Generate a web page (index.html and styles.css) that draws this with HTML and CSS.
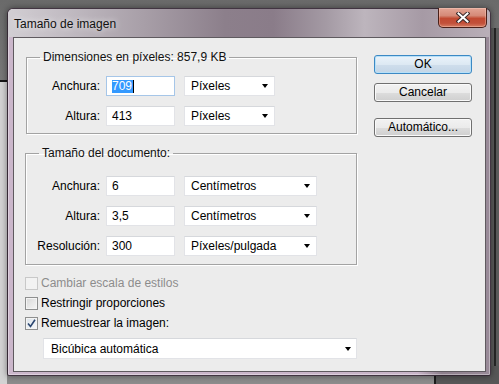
FILE: index.html
```html
<!DOCTYPE html>
<html lang="es">
<head>
  <meta charset="UTF-8" />
  <title>Tamaño de imagen</title>
  <link rel="stylesheet" href="styles.css">
</head>
<body>

  <div class="window">

    <header class="titlebar">
      <span class="title">Tamaño de imagen</span>
      <button class="close-btn" type="button" aria-label="Cerrar">
        <svg width="14" height="11" viewBox="0 0 14 11">
          <path d="M2.5 1.5 L11.5 9.5 M11.5 1.5 L2.5 9.5" stroke="#3a2a2a" stroke-width="4" stroke-linecap="square" />
          <path d="M2.5 1.5 L11.5 9.5 M11.5 1.5 L2.5 9.5" stroke="#ffffff" stroke-width="2" stroke-linecap="square" />
        </svg>
      </button>
    </header>

    <div class="client">

      <!-- columna izquierda: grupos y opciones -->
      <div class="main-col">

        <fieldset class="group group-px">
          <legend>Dimensiones en píxeles: 857,9 KB</legend>
          <div class="field-row">
            <label>Anchura:</label>
            <div class="text-input focused"><span class="selected-text">709</span><span class="caret"></span></div>
            <div class="combo">Píxeles<span class="arrow"></span></div>
          </div>
          <div class="field-row">
            <label>Altura:</label>
            <div class="text-input">413</div>
            <div class="combo">Píxeles<span class="arrow"></span></div>
          </div>
        </fieldset>

        <fieldset class="group group-doc">
          <legend>Tamaño del documento:</legend>
          <div class="field-row">
            <label>Anchura:</label>
            <div class="text-input">6</div>
            <div class="combo combo-wide">Centímetros<span class="arrow"></span></div>
          </div>
          <div class="field-row">
            <label>Altura:</label>
            <div class="text-input">3,5</div>
            <div class="combo combo-wide">Centímetros<span class="arrow"></span></div>
          </div>
          <div class="field-row">
            <label>Resolución:</label>
            <div class="text-input">300</div>
            <div class="combo combo-wide">Píxeles/pulgada<span class="arrow"></span></div>
          </div>
        </fieldset>

        <div class="checks">
          <div class="check-row disabled"><span class="checkbox"></span>Cambiar escala de estilos</div>
          <div class="check-row"><span class="checkbox"></span>Restringir proporciones</div>
          <div class="check-row"><span class="checkbox checked">
            <svg width="9" height="9" viewBox="0 0 9 9"><path d="M1 4.5 L3.5 7.5 L8 0.8" fill="none" stroke="#2b4670" stroke-width="1.6" /></svg>
          </span>Remuestrear la imagen:</div>
        </div>

        <div class="combo combo-method">Bicúbica automática<span class="arrow"></span></div>

      </div>

      <!-- columna derecha: botones -->
      <div class="button-col">
        <button class="btn btn-default" type="button">OK</button>
        <button class="btn" type="button">Cancelar</button>
        <button class="btn btn-auto" type="button">Automático...</button>
      </div>

    </div>
  </div>

</body>
</html>
```

FILE: styles.css
```css
/* --- base --- */
*, *::before, *::after { box-sizing: border-box; }
body {
  margin: 0; width: 499px; height: 384px; overflow: hidden;
  font-family: 'Liberation Sans', Arial, sans-serif; font-size: 12px; color: #000;
  background:
    linear-gradient(#161616, #161616) 0 80px / 10px 2px no-repeat,
    linear-gradient(#d3d3d3, #d3d3d3) 0 82px / 7px 100% no-repeat,
    linear-gradient(#1c1c1c, #1c1c1c) 434px 366px / 2px 30px no-repeat,
    linear-gradient(#575757, #575757) 436px 366px / 70px 30px no-repeat,
    linear-gradient(#262626, #262626) 494px 28px / 2px 100% no-repeat,
    linear-gradient(#5b5b5b, #5b5b5b) 491px 28px / 10px 100% no-repeat,
    linear-gradient(to bottom, #6a6a6a, #7d7d7d 30%, #8c8c8c);
}

/* --- ventana (marco aero) --- */
.window {
  margin: 8px 0 0 7px; width: 484px; height: 368px;
  display: flex; flex-direction: column;
  border: 1px solid rgba(20, 10, 20, 0.75); border-radius: 6px 6px 2px 2px;
  background: linear-gradient(to right, #cbb7cb 0%, #c8b4c8 85%, #8d7f8c 90%, #9a8b99 100%);
  box-shadow: 0 0 6px rgba(0, 0, 0, 0.45), inset 0 0 0 1px rgba(255, 255, 255, 0.35);
}
.titlebar {
  height: 28px; flex: none; display: flex; align-items: flex-start;
  border-radius: 5px 5px 0 0;
  background: linear-gradient(to right, #d2ced3 0%, #c1bbc2 12%, #a89fa8 28%, #8c7f8b 45%, #8a7c89 55%, #a49aa4 66%, #bdb5bd 74%, #a69aa5 86%, #b9afb8 100%);
}
.title { padding: 7px 0 0 6px; font-size: 12px; line-height: 16px; color: #111; text-shadow: 0 0 6px rgba(255, 255, 255, 0.9); }
.close-btn {
  margin: -1px 3px 0 auto; width: 49px; height: 20px; padding: 0;
  display: flex; align-items: center; justify-content: center;
  border: 1px solid #4a2019; border-top: none; border-radius: 0 0 5px 5px;
  background: linear-gradient(to bottom, #e3a595 0%, #d58a77 40%, #c14a31 55%, #c2503a 80%, #d67e64 100%);
  box-shadow: inset 0 0 0 1px rgba(255, 220, 210, 0.35);
}
.close-btn svg { display: block; }

.client {
  flex: 1; margin: 0 4px 3px 5px; display: flex;
  background: #ececec; border: 1px solid #5f5a5f;
}

/* --- columna principal --- */
.main-col { width: 360px; padding: 11px 0 0 11px; display: flex; flex-direction: column; }

.group {
  margin: 0; width: 331px; padding: 0 0 7px 0;
  border: 1px solid #a3a3a3; border-radius: 0;
  box-shadow: 1px 1px 0 #fff, inset 1px 1px 0 #fff;
}
.group legend { margin-left: 13px; padding: 0 3px; line-height: 16px; color: #111; }
.group-px { margin-left: 1px; }
.group-doc { margin-top: 11px; padding-top: 2px; padding-bottom: 8px; width: 332px; }

.field-row { display: flex; align-items: center; height: 20px; margin-top: 10px; }
.group-px .field-row:first-of-type { margin-top: 11px; }
.group-doc .field-row:first-of-type { margin-top: 13px; }
.group-px .field-row label { width: 73px; }
.field-row label { width: 74px; text-align: right; padding-right: 0; }

.text-input {
  margin-left: 6px; width: 69px; height: 20px; padding: 0 0 0 5px;
  display: flex; align-items: center;
  background: #fff; border: 1px solid #e2e3e7; border-top-color: #d6d8dc;
}
.text-input.focused { border-color: #a6c6e8; }
.selected-text { background: #3399ff; color: #fff; line-height: 13px; padding: 0 1px 0 0; }
.caret { width: 1px; height: 13px; background: #000; }

.combo {
  position: relative; margin-left: 9px; width: 91px; height: 20px; padding: 0 0 0 6px;
  display: flex; align-items: center;
  background: #fff; border: 1px solid #e2e3e7; border-top-color: #d6d8dc;
}
.combo-wide { width: 133px; }
.arrow {
  position: absolute; right: 6px; top: 7px;
  border-left: 3.5px solid transparent; border-right: 3.5px solid transparent; border-top: 4px solid #000;
}

/* --- casillas --- */
.checks { margin-top: 8px; display: flex; flex-direction: column; }
.check-row { height: 20px; display: flex; align-items: center; gap: 3px; }
.checkbox {
  width: 13px; height: 13px; display: flex; align-items: center; justify-content: center;
  border: 1px solid #8e8f8f;
  background: linear-gradient(135deg, #d8d8d8, #f6f6f6);
  box-shadow: inset 0 0 0 1px #f4f4f4;
}
.check-row.disabled { color: #8c8c8c; }
.check-row.disabled .checkbox { border-color: #c8c8c8; background: #f2f2f2; box-shadow: none; }
.checkbox.checked { background: linear-gradient(135deg, #dce3ea, #f8f9fa); }
.checkbox svg { display: block; }

.combo-method { margin: 5px 0 0 18px; width: 314px; height: 21px; padding-left: 7px; }
.combo-method .arrow { top: 8px; right: 5px; }

/* --- botones --- */
.button-col { padding: 17px 0 0 0; display: flex; flex-direction: column; }
.btn {
  width: 98px; height: 19px; padding: 0; font: inherit; color: #000; line-height: 15px;
  border: 1px solid #707070; border-radius: 3px;
  background: linear-gradient(to bottom, #f2f2f2 0%, #ebebeb 50%, #dddddd 51%, #cfcfcf 100%);
  box-shadow: inset 0 0 0 1px #fafafa;
}
.btn + .btn { margin-top: 9px; }
.btn-default {
  border-color: #3c89c4;
  background: linear-gradient(to bottom, #eaf3fa 0%, #dde9f3 50%, #cfdeec 51%, #c3d5e6 100%);
  box-shadow: inset 0 0 0 1px #b7e0f8;
}
.btn + .btn-auto { margin-top: 16px; }
```
